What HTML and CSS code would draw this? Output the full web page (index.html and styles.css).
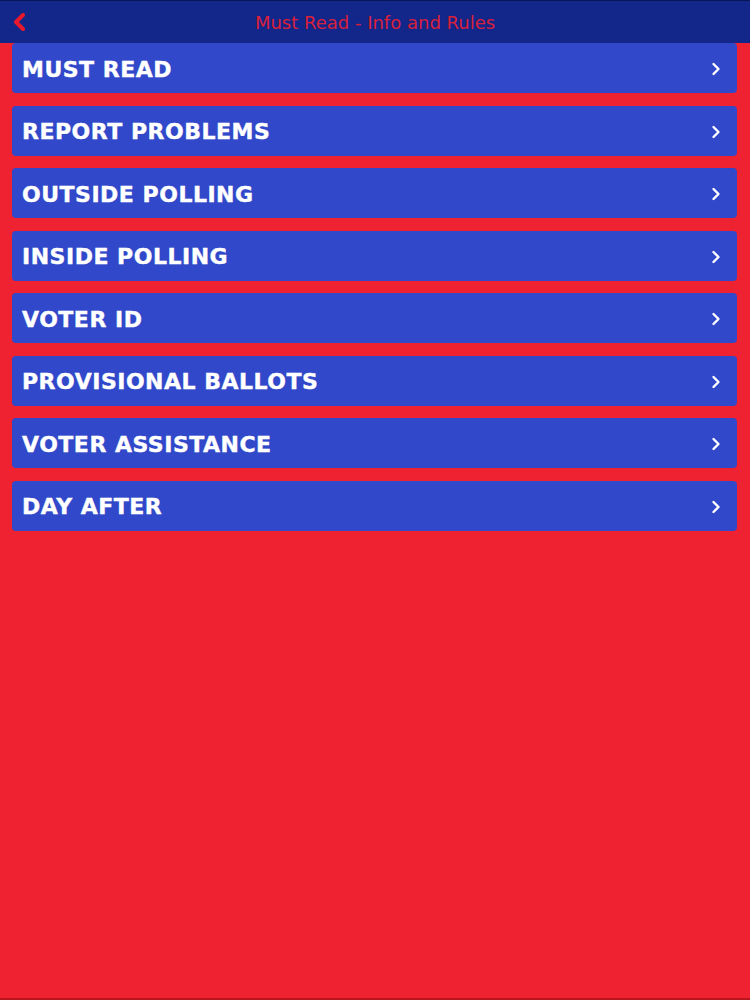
FILE: index.html
```html
<!DOCTYPE html>
<html>
<head>
<meta charset="utf-8">
<link rel="stylesheet" href="styles.css">
</head>
<body>
<header class="bar">
  <span class="back">
    <svg width="14" height="18" viewBox="0 0 14 18"><path d="M11 2 L4 9 L11 16" fill="none" stroke="#e8192c" stroke-width="4" stroke-linecap="round" stroke-linejoin="round"/></svg>
  </span>
  <h1 class="title">Must Read - Info and Rules</h1>
</header>
<main class="list">
  <div class="row"><span class="label">MUST READ</span><span class="chev"><svg width="10" height="14" viewBox="0 0 10 14"><path d="M2.5 2 L7.5 7 L2.5 12" fill="none" stroke="#fff" stroke-width="2.4" stroke-linecap="round" stroke-linejoin="round"/></svg></span></div>
  <div class="row"><span class="label">REPORT PROBLEMS</span><span class="chev"><svg width="10" height="14" viewBox="0 0 10 14"><path d="M2.5 2 L7.5 7 L2.5 12" fill="none" stroke="#fff" stroke-width="2.4" stroke-linecap="round" stroke-linejoin="round"/></svg></span></div>
  <div class="row"><span class="label">OUTSIDE POLLING</span><span class="chev"><svg width="10" height="14" viewBox="0 0 10 14"><path d="M2.5 2 L7.5 7 L2.5 12" fill="none" stroke="#fff" stroke-width="2.4" stroke-linecap="round" stroke-linejoin="round"/></svg></span></div>
  <div class="row"><span class="label">INSIDE POLLING</span><span class="chev"><svg width="10" height="14" viewBox="0 0 10 14"><path d="M2.5 2 L7.5 7 L2.5 12" fill="none" stroke="#fff" stroke-width="2.4" stroke-linecap="round" stroke-linejoin="round"/></svg></span></div>
  <div class="row"><span class="label">VOTER ID</span><span class="chev"><svg width="10" height="14" viewBox="0 0 10 14"><path d="M2.5 2 L7.5 7 L2.5 12" fill="none" stroke="#fff" stroke-width="2.4" stroke-linecap="round" stroke-linejoin="round"/></svg></span></div>
  <div class="row"><span class="label">PROVISIONAL BALLOTS</span><span class="chev"><svg width="10" height="14" viewBox="0 0 10 14"><path d="M2.5 2 L7.5 7 L2.5 12" fill="none" stroke="#fff" stroke-width="2.4" stroke-linecap="round" stroke-linejoin="round"/></svg></span></div>
  <div class="row"><span class="label">VOTER ASSISTANCE</span><span class="chev"><svg width="10" height="14" viewBox="0 0 10 14"><path d="M2.5 2 L7.5 7 L2.5 12" fill="none" stroke="#fff" stroke-width="2.4" stroke-linecap="round" stroke-linejoin="round"/></svg></span></div>
  <div class="row"><span class="label">DAY AFTER</span><span class="chev"><svg width="10" height="14" viewBox="0 0 10 14"><path d="M2.5 2 L7.5 7 L2.5 12" fill="none" stroke="#fff" stroke-width="2.4" stroke-linecap="round" stroke-linejoin="round"/></svg></span></div>
</main>
</body>
</html>
```
FILE: styles.css
```css
html, body {
  margin: 0;
  padding: 0;
}
body {
  width: 750px;
  height: 1000px;
  background: #ee2230;
  font-family: "DejaVu Sans", Verdana, sans-serif;
  overflow: hidden;
  box-sizing: border-box;
  border-bottom: 2px solid #b8151f;
}
.bar {
  height: 43px;
  box-sizing: border-box;
  background: #13268a;
  border-top: 1px solid #0a1656;
  display: flex;
  align-items: center;
  justify-content: center;
  position: relative;
}
.back {
  position: absolute;
  left: 12px;
  top: 12px;
  display: flex;
}
.title {
  margin: 0;
  font-size: 18px;
  font-weight: normal;
  color: #d9203a;
  padding-top: 1px;
}
.list {
  display: flex;
  flex-direction: column;
  gap: 12.5px;
  padding: 0 13px 0 12px;
}
.row {
  height: 50px;
  background: #3048c9;
  border-radius: 4px;
  display: flex;
  align-items: center;
  justify-content: space-between;
  padding: 0 16px 0 10px;
}
.label {
  color: #fff;
  font-weight: bold;
  font-size: 22px;
  letter-spacing: 0.5px;
  -webkit-text-stroke: 0.4px #fff;
  padding-top: 2px;
}
.chev {
  display: flex;
  padding-top: 2px;
}
```
